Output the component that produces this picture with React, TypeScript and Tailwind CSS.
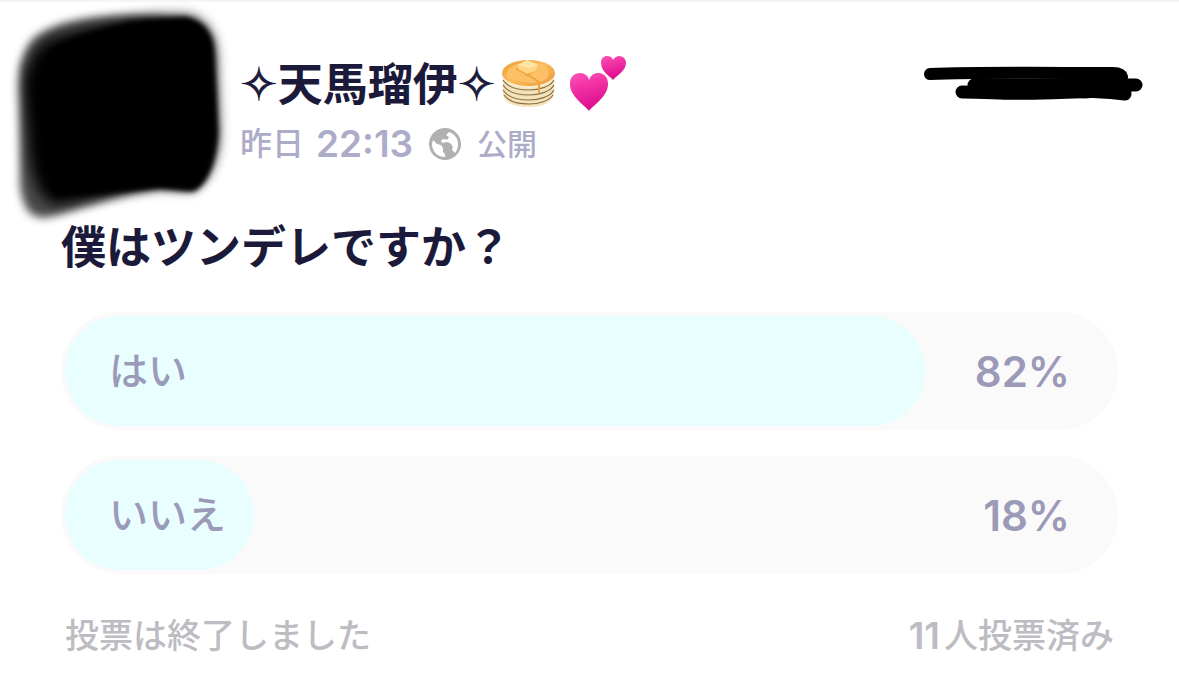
const options = [
  { label: 'はい', percent: 82 },
  { label: 'いいえ', percent: 18 },
]

function Avatar() {
  return (
    <svg viewBox="0 0 240 230" className="h-[230px] w-60 shrink-0" role="img" aria-label="アバター">
      <defs>
        <filter id="soft" x="-20%" y="-20%" width="140%" height="140%">
          <feGaussianBlur stdDeviation="4" />
        </filter>
        <filter id="edge" x="-20%" y="-20%" width="140%" height="140%">
          <feGaussianBlur stdDeviation="7" />
        </filter>
        <filter id="side" x="-20%" y="-20%" width="140%" height="140%">
          <feGaussianBlur stdDeviation="2.5" />
        </filter>
      </defs>
      <path
        filter="url(#soft)"
        fillOpacity="0.700"
        d="M34 36C55 19 90 14 130 13L185 16C205 20 213 32 214 50L217 130C215 165 205 184 192 189L160 186C125 190 85 206 50 215C30 218 24 208 20 185L20 65C24 50 27 44 34 36Z"
      />
      <path
        filter="url(#edge)"
        d="M44 40C70 28 110 22 150 15L190 15C207 21 213 35 214 50L217 130C216 160 206 176 190 185C175 186 165 182 153 185C120 188 85 198 55 203C40 198 34 180 30 160L23 80C28 62 34 48 44 40Z"
      />
      <path
        filter="url(#side)"
        d="M130 20L185 16C204 20 212 32 213 50L217 130C215 165 205 184 193 189L160 186C130 188 85 195 55 194C48 170 45 80 50 50C70 34 100 27 130 20Z"
      />
    </svg>
  )
}

function Pancakes() {
  return (
    <svg viewBox="0 0 56 52" className="h-[52px] w-14" role="img" aria-label="パンケーキ">
      <defs>
        <linearGradient id="cake" x1="0" y1="0" x2="1" y2="1">
          <stop offset="0" stopColor="#e9a03c" />
          <stop offset="0.5" stopColor="#fbb958" />
          <stop offset="1" stopColor="#e8993a" />
        </linearGradient>
      </defs>
      <path d="M2 18V37C4 46 15 49 28 49S51 45 53 36V18Z" fill="#f3e3bb" />
      <g fill="none" stroke="#8d6c43" strokeWidth="1.2">
        <path d="M2 22C7 30 18 32 28 32S49 29 53 22" />
        <path d="M2 27C7 35 18 37 28 37S49 34 53 27" />
        <path d="M2 32C7 40 18 42 28 42S49 39 53 32" />
        <path d="M3 37C8 44 18 46 28 46S48 43 52 37" />
      </g>
      <path d="M1 15V18C3 26 15 30 28 30S52 26 54 18V15Z" fill="#faedcd" />
      <ellipse cx="27.500" cy="15" rx="26.500" ry="13" fill="url(#cake)" />
      <path d="M6 15C8 8 18 4 30 4S50 10 47 18 29 26 17 23 5 21 6 15Z" fill="#fec067" />
      <path
        d="M16 11L24 15L38 24V34M35 12L25 17"
        fill="none"
        stroke="#eda33b"
        strokeWidth="2"
        strokeLinecap="round"
      />
      <path d="M17 7L26 2L37 7L35 13L26 16L17 11Z" fill="#ffd582" />
      <path d="M17 7L26 2L37 7L28 10Z" fill="#ffe5a5" />
    </svg>
  )
}

function Hearts() {
  return (
    <svg viewBox="0 0 58 58" className="h-[58px] w-[58px]" role="img" aria-label="ハート">
      <defs>
        <linearGradient id="pink" x1="0" y1="0" x2="0.300" y2="1">
          <stop offset="0" stopColor="#fb55b8" />
          <stop offset="0.350" stopColor="#f536a8" />
          <stop offset="1" stopColor="#dd0d8d" />
        </linearGradient>
      </defs>
      <path
        fill="url(#pink)"
        d="M20 56C17 51 1 42 1 29C1 22 5 18 11 18C16 18 19 21 20 25C22 20 25 18 29 18C35 18 39 22 39 29C39 42 23 51 20 56Z"
      />
      <path
        fill="url(#pink)"
        d="M44 25C42 22 32 17 32 8C32 3 35 1 38 1C41 1 43 2 44 5C46 2 48 1 50 1C54 1 57 4 57 8C57 16 47 21 44 25Z"
      />
    </svg>
  )
}

function Globe() {
  return (
    <svg viewBox="0 0 32 32" className="size-8" aria-hidden="true">
      <circle cx="16" cy="16" r="16" fill="#b0b0b3" />
      <path
        fill="#fff"
        d="M4 12L8 16L12 17L14 20V24L16 26V29C8 29 3 23 3 16ZM20 4C26 6 29 11 29 16C29 20 28 22 26 25L23 22C25 18 22 15 18 14L13 15L12 12L16 11L18 12L20 9L17 7Z"
      />
    </svg>
  )
}

function Scribble() {
  return (
    <svg viewBox="0 0 220 40" className="h-10 w-[220px]" aria-hidden="true">
      <path d="M70 28A15 11 0 0 0 96 28Z" fill="#a9a8ca" />
      <ellipse cx="162" cy="30" rx="6" ry="3" fill="#a9a8ca" />
      <g fill="none" stroke="#000" strokeLinecap="round" strokeLinejoin="round" strokeWidth="12">
        <path d="M7 8C60 6 130 7 190 7Q198 7 199 11" />
        <path d="M51 19H199Q210 19 213 19" strokeWidth="13" />
        <path d="M39 26C70 26 80 28 120 27S175 24 202 28" strokeWidth="13" />
        <path d="M54 20H198L203 23" />
      </g>
    </svg>
  )
}

export default function App() {
  return (
    <main className="border-t-2 border-[#f5f5f6] bg-white pb-8 font-['Inter','Noto_Sans_CJK_JP',sans-serif] text-[#1c1a3a]">
      <header className="flex h-[220px] items-start pr-9">
        <Avatar />
        <div className="flex flex-1 flex-col pt-[50px]">
          <div className="flex h-16 items-center">
            <h1 className="flex items-center text-[45px] leading-none font-bold whitespace-nowrap">
              <span className="font-['DejaVu_Sans',sans-serif] [-webkit-text-stroke:1px_#1c1a3a]">✧</span>
              天馬瑠伊
              <span className="font-['DejaVu_Sans',sans-serif] [-webkit-text-stroke:1px_#1c1a3a]">✧</span>
            </h1>
            <div className="ml-1.5 flex items-center gap-3">
              <Pancakes />
              <Hearts />
            </div>
          </div>
          <div className="flex h-14 items-center gap-4 text-[#adacc8]">
            <time className="flex items-center gap-3 whitespace-nowrap">
              <span className="text-[32px] font-medium">昨日</span>
              <span className="text-[37px] font-semibold">22:13</span>
            </time>
            <Globe />
            <span className="text-[30px] font-medium">公開</span>
          </div>
        </div>
        <div className="pt-16">
          <Scribble />
        </div>
      </header>

      <section className="px-[61px]">
        <h2 className="text-[45px] leading-[52px] font-bold">僕はツンデレですか？</h2>

        <ul className="mt-[38px] flex flex-col gap-[26px]">
          {options.map((option) => (
            <li key={option.label} className="grid h-[118px] rounded-[59px] bg-[#fafafa] p-1 text-[#9b9ab8]">
              <div
                className="rounded-[55px] bg-[#e8feff] [grid-area:1/1]"
                style={{ width: `${option.percent}%` }}
              />
              <div className="flex items-center justify-between px-11 [grid-area:1/1]">
                <span className="text-[39px] font-medium">{option.label}</span>
                <span className="text-[42px] font-semibold">{option.percent}%</span>
              </div>
            </li>
          ))}
        </ul>

        <footer className="mt-[38px] flex justify-between px-1 text-[34px] leading-[48px] font-medium text-[#bcbcc2]">
          <span>投票は終了しました</span>
          <span className="flex gap-1">
            <span className="text-[37px] font-semibold">11</span>
            人投票済み
          </span>
        </footer>
      </section>
    </main>
  )
}
